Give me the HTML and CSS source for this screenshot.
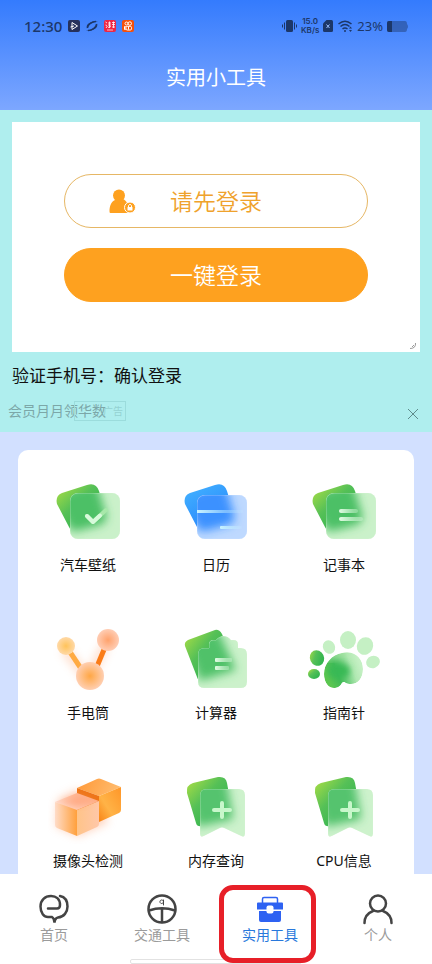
FILE: index.html
```html
<!DOCTYPE html>
<html lang="zh-CN">
<head>
    <meta charset="UTF-8">
    <meta name="viewport" content="width=device-width, initial-scale=1.0">
    <title>实用小工具</title>
    <link rel="stylesheet" href="styles.css">
</head>
<body>

    <!-- shared gradients, filters and shapes -->
    <svg class="defs" width="0" height="0" aria-hidden="true">
        <defs>
            <linearGradient id="green" x1="0" y1="0.1" x2="0.7" y2="0.8">
                <stop offset="0" stop-color="#a5dc45"/>
                <stop offset="0.5" stop-color="#55c057"/>
                <stop offset="1" stop-color="#35b64f"/>
            </linearGradient>
            <linearGradient id="blue" x1="0" y1="0" x2="0.6" y2="1">
                <stop offset="0" stop-color="#44b4ff"/>
                <stop offset="1" stop-color="#2684fc"/>
            </linearGradient>
            <linearGradient id="shine">
                <stop offset="0" stop-color="#e2fce4"/>
                <stop offset="1" stop-color="#e2fce4" stop-opacity="0.3"/>
            </linearGradient>
            <linearGradient id="shine-blue">
                <stop offset="0" stop-color="#c9f4ff"/>
                <stop offset="1" stop-color="#c9f4ff" stop-opacity="0.1"/>
            </linearGradient>
            <linearGradient id="pad-fill" x1="0.1" y1="0.7" x2="0.95" y2="0.4">
                <stop offset="0" stop-color="#5cc650"/>
                <stop offset="0.3" stop-color="#42bb57"/>
                <stop offset="0.75" stop-color="#b2e9b3"/>
                <stop offset="1" stop-color="#c5f0c4"/>
            </linearGradient>
            <radialGradient id="ball-yellow">
                <stop offset="0" stop-color="#ffc35a"/>
                <stop offset="1" stop-color="#ffd9a8"/>
            </radialGradient>
            <radialGradient id="ball-pink">
                <stop offset="0" stop-color="#ffa26c"/>
                <stop offset="1" stop-color="#ffcdb4"/>
            </radialGradient>
            <radialGradient id="ball-orange">
                <stop offset="0" stop-color="#ffa745"/>
                <stop offset="1" stop-color="#ffcfb2"/>
            </radialGradient>
            <linearGradient id="cube-top" x1="0" y1="0.4" x2="1" y2="0.6">
                <stop offset="0" stop-color="#ff9a3a"/>
                <stop offset="1" stop-color="#ffbd70"/>
            </linearGradient>
            <linearGradient id="cube-right" x1="1" y1="0" x2="0" y2="1">
                <stop offset="0" stop-color="#ff9628"/>
                <stop offset="0.6" stop-color="#ffb347"/>
                <stop offset="1" stop-color="#f98416"/>
            </linearGradient>
            <linearGradient id="glass-left">
                <stop offset="0" stop-color="#ffdcc8"/>
                <stop offset="1" stop-color="#ffa03c"/>
            </linearGradient>
            <linearGradient id="glass-right">
                <stop offset="0" stop-color="#ffc489"/>
                <stop offset="1" stop-color="#ffc7a8"/>
            </linearGradient>
            <linearGradient id="glass-top" x1="0" x2="1" y1="0.7" y2="0.2">
                <stop offset="0" stop-color="#ffdccd"/>
                <stop offset="1" stop-color="#ffa67a"/>
            </linearGradient>
            <filter id="blur" x="-30%" y="-30%" width="160%" height="160%">
                <feGaussianBlur stdDeviation="5"/>
            </filter>
            <filter id="blur-small" x="-30%" y="-30%" width="160%" height="160%">
                <feGaussianBlur stdDeviation="3"/>
            </filter>

            <path id="card-back" d="M14 17 39 9Q48 6 51 15L58 38Q60 46 52 49L29 55Q23 56 21 51L9 28Q7 20 14 17Z"/>
            <path id="mark-back" d="M17 11 42 5Q50 4 51 11L57 44Q57 48 54 48L26 54Q21 55 20 51L11 21Q10 13 17 11Z"/>
            <path id="mark-front" d="M30 17H63Q69 17 69 23V62Q69 66 65 64L48 56Q46 55 44 56L28 64Q24 66 24 62V23Q24 17 30 17Z"/>
            <path id="file-front" d="M28 24H33V20Q33 16 37 16H40Q43 12 47.500 12T55 16H58Q62 16 62 20V24H65Q71 24 71 30V58Q71 64 65 64H28Q22 64 22 58V30Q22 24 28 24Z"/>
            <path id="pad" d="M38 29C50 26 59 34 59 45C59 54 54 60 47 60C40 60 41 56 38 59C36 63 33 64 30 64C24 64 20 58 20 50C20 39 28 31 38 29Z"/>

            <clipPath id="clip-card"><rect x="22" y="17" width="50" height="46" rx="8"/></clipPath>
            <clipPath id="clip-blue"><rect x="21" y="19" width="50" height="44" rx="8"/></clipPath>
            <clipPath id="clip-mark"><use href="#mark-front"/></clipPath>
            <clipPath id="clip-file"><use href="#file-front"/></clipPath>
            <clipPath id="clip-pad"><use href="#pad"/></clipPath>

            <symbol id="green-card" viewBox="0 0 80 72">
                <use href="#card-back" fill="url(#green)"/>
                <g clip-path="url(#clip-card)">
                    <rect x="22" y="17" width="50" height="46" fill="#c5f0c4"/>
                    <use href="#card-back" fill="#39b955" filter="url(#blur)"/>
                    <rect x="22" y="17" width="50" height="46" rx="8" fill="#fff" fill-opacity="0.1" stroke="#d8f6d4" stroke-opacity="0.5"/>
                </g>
            </symbol>
            <symbol id="bookmark" viewBox="0 0 80 72">
                <use href="#mark-back" fill="url(#green)"/>
                <g clip-path="url(#clip-mark)">
                    <use href="#mark-front" fill="#c5f0c4"/>
                    <use href="#mark-back" fill="#39b955" filter="url(#blur)"/>
                    <use href="#mark-front" fill="#fff" fill-opacity="0.15" stroke="#d8f6d4" stroke-opacity="0.5"/>
                </g>
                <path d="M46 31V45M38 38H54" stroke="#c8f7cb" stroke-width="4" stroke-linecap="round"/>
            </symbol>
        </defs>
    </svg>

    <header class="header">
        <div class="status-bar">
            <span class="time">12:30</span>
            <svg class="app-icon" viewBox="0 0 12 12">
                <rect width="12" height="12" rx="2" fill="#26315c"/>
                <path d="M4 2.500V9.500L9.500 6ZM2.500 7 6 6" fill="none" stroke="#fff"/>
            </svg>
            <svg class="app-icon" viewBox="0 0 12 12">
                <path d="M1 8.500C-1 4 6 .5 12 1C7 2 2 5 1 8.500ZM11 3.500C13 8 6 11.500 0 11C5 10 10 7 11 3.500Z" fill="#1c3769"/>
                <path d="M1.500 8C2 4 6 1.500 10 1.500M10.500 4C10 8 6 10.500 2 10.500" fill="none" stroke="#1c3769" stroke-width="1.400"/>
            </svg>
            <svg class="app-icon" viewBox="0 0 12 12">
                <rect width="12" height="12" rx="2" fill="#ee2745"/>
                <path d="M1.500 2 3 3M1.500 5 3 5.500M2 8 3.500 6M4 3H7M4 5H7M5.500 1.500V8M8 2.500H11M8 4.500H11M9.500 1.500V8M8 7H11M4 7.500 7 6.500" stroke="#fff" stroke-width="0.800"/>
                <path d="M3 10H9" stroke="#ffb9bd"/>
            </svg>
            <svg class="app-icon" viewBox="0 0 12 12">
                <rect width="12" height="12" rx="2" fill="#f4500b"/>
                <g fill="none" stroke="#fff">
                    <circle cx="4.500" cy="3.500" r="1.500"/>
                    <circle cx="7.800" cy="3.500" r="1.700"/>
                    <rect x="4" y="6.300" width="5.500" height="3.700" rx="1.200"/>
                    <path d="M4 7 2.500 6.500V9.500L4 9M6.500 6.500V9.500"/>
                </g>
            </svg>

            <span class="spacer"></span>

            <svg class="vibrate" viewBox="0 0 15 14">
                <rect x="4" y="1" width="7" height="12" rx="1.500"/>
                <path d="M2.500 3.500V10.500M12.500 3.500V10.500M.5 5.500V8.500M14.500 5.500V8.500" stroke="#1c3769"/>
            </svg>
            <span class="speed"><b>15.0</b><b>KB/s</b></span>
            <svg class="sim" viewBox="0 0 10 12">
                <path d="M3.500 0H8.500Q10 0 10 1.500V10.500Q10 12 8.500 12H1.500Q0 12 0 10.500V3.500Z"/>
                <path d="M3.500 4.500 6.500 8M6.500 4.500 3.500 8" stroke="#9bc0ff"/>
            </svg>
            <svg class="wifi" viewBox="0 0 15 12">
                <path d="M.5 4Q7 -1.500 13.500 4M2.500 6.500Q7 2.500 11.500 6.500M4.500 9Q7 7 9.500 9" fill="none" stroke="#1c3769" stroke-width="1.500"/>
                <circle cx="7" cy="11" r="1"/>
                <path d="M12.500 6.500 14 8.500H11ZM12.500 12 11 10H14Z"/>
            </svg>
            <span class="percent">23%</span>
            <svg class="battery" viewBox="0 0 21 11">
                <path d="M2 0H18Q20 0 20 3Q21 4 21 5.500T20 8Q20 11 18 11H2Q0 11 0 9V2Q0 0 2 0Z" fill-opacity="0.450"/>
                <path d="M2 0H5V11H2Q0 11 0 9V2Q0 0 2 0Z"/>
            </svg>
        </div>
        <h1 class="title">实用小工具</h1>
    </header>

    <section class="promo">
        <div class="login-panel">
            <button class="login-btn login-btn-outline" type="button">
                <svg class="user-lock" viewBox="0 0 27 25">
                    <circle cx="10" cy="6.500" r="6"/>
                    <path d="M6 10H14C18 12 19 15 19 19V24H1.500Q.5 24 .5 22.500C.5 17 2 13 6 11Z"/>
                    <circle cx="21" cy="18.500" r="5.500" stroke="#fff"/>
                    <rect x="18.500" y="18" width="5" height="3.500" rx="0.500" fill="#fff"/>
                    <path d="M19.500 18V16.500Q21 14 22.500 16.500V18" fill="none" stroke="#fff"/>
                </svg>
                请先登录
            </button>
            <button class="login-btn" type="button">一键登录</button>
            <svg class="corner-mark" viewBox="0 0 6 6">
                <path d="M5.500 0Q6 5.500 0 5.500M4 2 2 4" fill="none" stroke="#999"/>
            </svg>
        </div>
        <h2 class="promo-title">验证手机号：确认登录</h2>
        <div class="promo-footer">
            <p class="promo-text">会员月月领华数<span class="ad-tag">广告</span></p>
            <button class="close" type="button" aria-label="关闭">
                <svg viewBox="0 0 12 12"><path d="M1 1 11 11M11 1 1 11" stroke="#5e8b8c"/></svg>
            </button>
        </div>
    </section>

    <main class="content">
        <div class="tools">
            <a class="tool" href="#">
                <svg class="tool-icon" viewBox="0 0 80 72">
                    <use href="#green-card"/>
                    <path d="M39 40 45 46 58 34" fill="none" stroke="#a8e8aa" stroke-width="4" stroke-linecap="round" stroke-linejoin="round"/>
                    <path d="M39 40 45 46 52 39.500" fill="none" stroke="#d7fadb" stroke-width="4" stroke-linecap="round" stroke-linejoin="round"/>
                </svg>
                <span>汽车壁纸</span>
            </a>
            <a class="tool" href="#">
                <svg class="tool-icon" viewBox="0 0 80 72">
                    <use href="#card-back" fill="url(#blue)"/>
                    <g clip-path="url(#clip-blue)">
                        <rect x="21" y="19" width="50" height="44" fill="#b7d5ff"/>
                        <use href="#card-back" fill="#2885ff" filter="url(#blur)"/>
                        <rect x="21" y="19" width="50" height="44" rx="8" fill="#fff" fill-opacity="0.100" stroke="#cfe4ff" stroke-opacity="0.500"/>
                    </g>
                    <rect x="21" y="34" width="46" height="3" fill="url(#shine-blue)"/>
                    <rect x="44" y="50" width="22" height="3" rx="1" fill="url(#shine-blue)"/>
                </svg>
                <span>日历</span>
            </a>
            <a class="tool" href="#">
                <svg class="tool-icon" viewBox="0 0 80 72">
                    <use href="#green-card"/>
                    <rect x="35" y="33" width="19" height="4" rx="2" fill="url(#shine)"/>
                    <rect x="35" y="41" width="24" height="4" rx="2" fill="url(#shine)"/>
                </svg>
                <span>记事本</span>
            </a>
            <a class="tool" href="#">
                <svg class="tool-icon" viewBox="0 0 80 72">
                    <path d="M16 25 40 55 58 20" fill="none" stroke="#ffae80" stroke-width="8" opacity="0.450" filter="url(#blur)"/>
                    <path d="M18 22 38 52" stroke="#ffab43" stroke-width="5"/>
                    <path d="M60 16 45 52" stroke="#fa7c18" stroke-width="5"/>
                    <circle cx="18" cy="22" r="9" fill="url(#ball-yellow)"/>
                    <circle cx="60" cy="16" r="11" fill="url(#ball-pink)"/>
                    <circle cx="42" cy="52" r="14" fill="url(#ball-orange)"/>
                </svg>
                <span>手电筒</span>
            </a>
            <a class="tool" href="#">
                <svg class="tool-icon" viewBox="0 0 80 72">
                    <path d="M12 16 39 6Q43 5 46 10L50 20 34 56 26 58Q22 57 21 53L9 22Q8 18 12 16Z" fill="url(#green)"/>
                    <g clip-path="url(#clip-file)">
                        <use href="#file-front" fill="#c5f0c4"/>
                        <path d="M9 18 42 6 60 46 24 57Z" fill="#39b955" filter="url(#blur)"/>
                        <use href="#file-front" fill="#fff" fill-opacity="0.120" stroke="#d8f6d4" stroke-opacity="0.500"/>
                    </g>
                    <rect x="39" y="34" width="17" height="4" rx="1" fill="url(#shine)"/>
                    <rect x="39" y="42" width="14" height="4" rx="1" fill="url(#shine)"/>
                </svg>
                <span>计算器</span>
            </a>
            <a class="tool" href="#">
                <svg class="tool-icon" viewBox="0 0 80 72">
                    <g fill="#c5f0c4">
                        <ellipse cx="25" cy="23" rx="6" ry="7" transform="rotate(-25 25 23)"/>
                        <ellipse cx="44" cy="16" rx="8" ry="9"/>
                        <ellipse cx="61" cy="22" rx="8" ry="9" transform="rotate(25 61 22)"/>
                        <ellipse cx="69" cy="38" rx="7" ry="6" transform="rotate(-20 69 38)"/>
                    </g>
                    <ellipse cx="13" cy="34" rx="7" ry="8" transform="rotate(-25 13 34)" fill="url(#green)"/>
                    <ellipse cx="10" cy="50" rx="6" ry="5" fill="url(#green)"/>
                    <g clip-path="url(#clip-pad)">
                        <use href="#pad" fill="url(#pad-fill)"/>
                        <ellipse cx="35" cy="47" rx="11" ry="8" fill="#39b955" filter="url(#blur-small)"/>
                        <path d="M24 36Q30 28 42 29" fill="none" stroke="#a9e5a5" stroke-width="5" filter="url(#blur-small)"/>
                    </g>
                </svg>
                <span>指南针</span>
            </a>
            <a class="tool" href="#">
                <svg class="tool-icon" viewBox="0 0 80 72">
                    <path d="M10 28 29 18 50 28 60 50 30 64 8 54Z" fill="#ffb18a" opacity="0.600" filter="url(#blur)"/>
                    <path d="M29 16 49 7Q51 6 53 7L73 15 51 24Z" fill="url(#cube-top)"/>
                    <path d="M51 24 73 15V38Q73 40 71 41L51 50Z" fill="url(#cube-right)"/>
                    <path d="M29 16 51 24V50L29 40Z" fill="#ee7518"/>
                    <path d="M7 30 29 21 51 29 29 38Z" fill="url(#glass-top)"/>
                    <path d="M7 30 29 38V64L9 56Q7 55 7 53Z" fill="url(#glass-left)"/>
                    <path d="M29 38 51 29V52Q51 54 49 55L29 64Z" fill="url(#glass-right)"/>
                    <path d="M12 30 29 23 46 29 29 35Z" fill="#ff9669" opacity="0.500" filter="url(#blur-small)"/>
                </svg>
                <span>摄像头检测</span>
            </a>
            <a class="tool" href="#">
                <svg class="tool-icon" viewBox="0 0 80 72"><use href="#bookmark"/></svg>
                <span>内存查询</span>
            </a>
            <a class="tool" href="#">
                <svg class="tool-icon" viewBox="0 0 80 72"><use href="#bookmark"/></svg>
                <span>CPU信息</span>
            </a>
        </div>
    </main>

    <nav class="tabs">
        <a class="tab" href="#">
            <svg class="tab-icon" viewBox="0 0 32 32">
                <path d="M10 15.500H19Q22 15.500 22 12C22 6 18 3 13 3C7 3 2.500 7 2.500 13.500C2.500 20 6 24 10 24H14Q16 25 16.500 29.500Q17 25 20 24.500C26 24 29.500 19 29.500 13.500C29.500 8 27 4 22 3"/>
            </svg>
            <span>首页</span>
        </a>
        <a class="tab" href="#">
            <svg class="tab-icon" viewBox="0 0 32 32">
                <circle cx="16" cy="16" r="13.500"/>
                <path d="M3 17.500Q16 13 29 17.500M16 16V29"/>
                <path d="M17.500 7V12M17.500 8.500A1.800 1.800 0 1 0 17.500 9" stroke-width="1"/>
            </svg>
            <span>交通工具</span>
        </a>
        <a class="tab tab-active" href="#">
            <svg class="tab-icon" viewBox="0 0 32 32">
                <path d="M8.500 10V6Q8.500 4.500 10 4.500H22Q23.500 4.500 23.500 6V10" stroke-width="1.500"/>
                <path d="M4 9.500H28Q29 9.500 29 10.500V16.500H3V10.500Q3 9.500 4 9.500ZM5 18H27V27Q27 29 25 29H7Q5 29 5 27Z" fill="#2e62f2" stroke="none"/>
                <rect x="12.500" y="12.500" width="7" height="8" rx="2" fill="#fff" stroke="none"/>
            </svg>
            <span>实用工具</span>
        </a>
        <a class="tab" href="#">
            <svg class="tab-icon" viewBox="0 0 32 32">
                <circle cx="16" cy="10.500" r="8"/>
                <path d="M2.500 30C2.500 24 6 20 11 18M29.500 30C29.500 24 26 20 21 18"/>
            </svg>
            <span>个人</span>
        </a>
        <div class="home-bar"></div>
    </nav>

</body>
</html>
```
FILE: styles.css
```css
* {
    box-sizing: border-box;
}

body {
    display: flex;
    flex-direction: column;
    height: 100vh;
    margin: 0;
    overflow: hidden;
    background-color: #d2e0ff;
    font-family: "Noto Sans", "Noto Sans CJK SC", sans-serif;
    color: #111;
}

h1, h2, p {
    margin: 0;
    font-weight: 400;
}

a {
    color: inherit;
    text-decoration: none;
}

button {
    font-family: inherit;
    cursor: pointer;
}

svg {
    display: block;
    flex: none;
}

.defs {
    position: absolute;
}

/* header */
.header {
    flex: none;
    height: 110px;
    background: linear-gradient(#347bfd, #7da7ff);
}

.status-bar {
    display: flex;
    align-items: center;
    height: 52px;
    padding: 0 24px;
    color: #1c3769;
    fill: #1c3769;
}

.time {
    font-size: 15px;
    font-weight: 500;
}

.app-icon {
    width: 12px;
    height: 12px;
    margin-left: 6px;
}

.spacer {
    flex: 1;
}

.vibrate {
    width: 15px;
    height: 14px;
}

.speed {
    display: flex;
    flex-direction: column;
    align-items: center;
    margin: 0 4px;
    font-family: Inter, sans-serif;
    font-size: 8px;
    line-height: 9px;
}

.speed b {
    font-weight: 600;
}

.sim {
    width: 10px;
    height: 12px;
}

.wifi {
    width: 15px;
    height: 12px;
    margin: 0 4px 0 5px;
}

.percent {
    font-size: 13px;
}

.battery {
    width: 21px;
    height: 11px;
    margin-left: 4px;
}

.title {
    font-size: 20px;
    line-height: 52px;
    text-align: center;
    color: #fff;
}

/* login promo */
.promo {
    flex: none;
    padding: 12px 12px 9px;
    background-color: #afeeee;
}

.login-panel {
    position: relative;
    display: flex;
    flex-direction: column;
    gap: 20px;
    padding: 52px 52px 50px;
    background-color: #fff;
}

.login-btn {
    position: relative;
    height: 54px;
    padding: 0 0 2px;
    border: 1px solid #fea11f;
    border-radius: 27px;
    background-color: #fea11f;
    font-size: 23px;
    font-weight: 350;
    color: #fff;
}

.login-btn-outline {
    border-color: #e6b765;
    background-color: #fff;
    color: #efa22c;
}

.user-lock {
    position: absolute;
    left: 44px;
    top: 14px;
    width: 27px;
    height: 25px;
    fill: #fea11f;
}

.corner-mark {
    position: absolute;
    right: 4px;
    bottom: 3px;
    width: 6px;
    height: 6px;
}

.promo-title {
    margin-top: 12px;
    font-size: 17px;
    line-height: 24px;
}

.promo-footer {
    display: flex;
    justify-content: space-between;
    align-items: center;
    margin: 11px -4px 0;
}

.promo-text {
    position: relative;
    font-size: 14px;
    line-height: 24px;
    color: #7ca7a8;
}

.ad-tag {
    position: absolute;
    right: -20px;
    top: 2px;
    width: 52px;
    height: 20px;
    padding-right: 2px;
    border: 1px solid #9bdcdc;
    font-size: 10px;
    line-height: 18px;
    text-align: right;
    color: #94d2d2;
}

.close {
    padding: 6px 5px 0;
    border: none;
    background: none;
}

.close svg {
    width: 12px;
    height: 12px;
}

/* tool grid */
.content {
    flex: 1;
    min-height: 0;
    padding: 18px 18px 0;
    overflow: hidden;
}

.tools {
    display: grid;
    grid-template-columns: repeat(3, 1fr);
    row-gap: 49px;
    padding: 26px 6px 49px;
    border-radius: 10px;
    background-color: #fff;
}

.tool {
    display: flex;
    flex-direction: column;
    align-items: center;
    gap: 7px;
    font-size: 14px;
    line-height: 20px;
}

.tool-icon {
    width: 80px;
    height: 72px;
}

/* bottom tabs */
.tabs {
    position: relative;
    flex: none;
    display: grid;
    grid-template-columns: repeat(4, 1fr);
    height: 90px;
    background-color: #fff;
}

.tab {
    position: relative;
    display: flex;
    flex-direction: column;
    align-items: center;
    padding-top: 19px;
    font-size: 14px;
    line-height: 20px;
    color: #9b9b9b;
}

.tab-icon {
    width: 32px;
    height: 32px;
    fill: none;
    stroke: #444;
    stroke-width: 2.5px;
    stroke-linecap: round;
}

.tab-active {
    z-index: 1;
    color: #2878dc;
}

.tab-active .tab-icon {
    stroke: #2e62f2;
}

.tab-active::after {
    content: "";
    position: absolute;
    top: 11px;
    left: 3px;
    right: 8px;
    bottom: 1px;
    border: 5px solid #e71f28;
    border-radius: 14px;
}

.home-bar {
    position: absolute;
    left: 30%;
    right: 30%;
    bottom: 0;
    height: 5px;
    border: 1px solid #e2e2e2;
    border-radius: 2px;
    background-color: #fff;
}
```
